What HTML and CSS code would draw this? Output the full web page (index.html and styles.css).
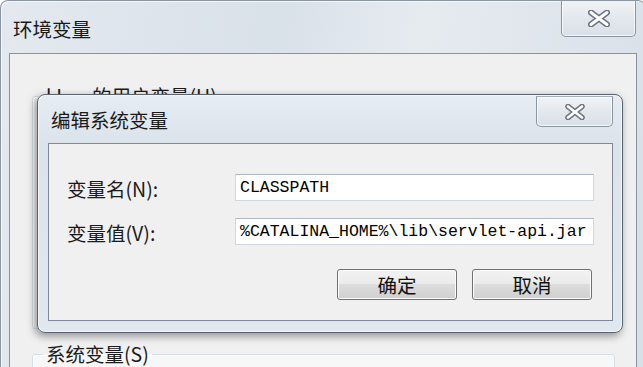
FILE: index.html
```html
<!DOCTYPE html>
<html>
<head>
	<meta charset="utf-8">
	<title>环境变量</title>
	<link rel="stylesheet" href="styles.css">
</head>
<body>
<div class="window">
	<div class="titlebar">
		<span class="title">环境变量</span>
		<div class="close close-main">
			<svg width="22" height="17" viewBox="0 0 22 17"><path d="M3 2.5 L19 14.5 M19 2.5 L3 14.5" stroke="#6d7580" stroke-width="6" stroke-linecap="round"/><path d="M3 2.5 L19 14.5 M19 2.5 L3 14.5" stroke="#fff" stroke-width="3" stroke-linecap="round"/></svg>
		</div>
	</div>
	<div class="client">
		<fieldset class="group group-user">
			<legend>lJ<span class="user-gap"></span>的用户变量(U)</legend>
		</fieldset>
		<fieldset class="group group-sys">
			<legend>系统变量(S)</legend>
		</fieldset>
	</div>

	<div class="dialog">
		<div class="dlg-titlebar">
			<span class="dlg-title">编辑系统变量</span>
			<div class="close close-dlg">
				<svg width="20" height="16" viewBox="0 0 20 16"><path d="M3 2.5 L17 13.5 M17 2.5 L3 13.5" stroke="#6d7580" stroke-width="5.5" stroke-linecap="round"/><path d="M3 2.5 L17 13.5 M17 2.5 L3 13.5" stroke="#fff" stroke-width="2.6" stroke-linecap="round"/></svg>
			</div>
		</div>
		<div class="dlg-client">
			<div class="form">
				<label class="label">变量名(N):</label>
				<div class="field">CLASSPATH</div>
				<label class="label">变量值(V):</label>
				<div class="field">%CATALINA_HOME%\lib\servlet-api.jar</div>
			</div>
			<div class="buttons">
				<button class="btn">确定</button>
				<button class="btn">取消</button>
			</div>
		</div>
	</div>
</div>
</body>
</html>
```
FILE: styles.css
```css
body{
	margin: 0;
	background: #fff;
	overflow: hidden;
	font-family: "Noto Sans CJK SC", sans-serif;
	color: #1a1a1a;
}
.window{
	position: relative;
	width: 646px;
	height: 367px;
	box-sizing: border-box;
	border: 1px solid #8c96a1;
	border-bottom: none;
	border-radius: 8px 8px 0 0;
	padding: 0 8px;
	overflow: hidden;
	background: linear-gradient(100deg, #e3e9ef 0%, #d9e1e9 40%, #e6ebf0 60%, #d7dfe7 100%);
	box-shadow: inset 1px 1px 0 #f4f7fa;
}
.titlebar{
	display: flex;
	height: 52px;
}
.title{
	font-size: 19.5px;
	line-height: 24px;
	padding: 16px 0 0 4px;
}
.close{
	margin-left: auto;
	display: flex;
	align-items: center;
	justify-content: center;
	box-sizing: border-box;
	border: 1px solid #8a95a2;
	border-top: none;
	border-radius: 0 0 5px 5px;
	background: linear-gradient(#f1f4f7, #e3e8ed 50%, #d9e0e7);
	box-shadow: inset 0 0 0 1px rgba(255,255,255,.7);
}
.close-main{
	width: 75px;
	height: 37px;
	margin-top: -1px;
	margin-right: 1px;
}
.client{
	height: 330px;
	border: 1px solid #8b939c;
	background: #f0f0f0;
	padding: 30px 21px 0 22px;
	display: flex;
	flex-direction: column;
	gap: 13px;
}
.group{
	margin: 0;
	padding: 0 10px;
	border: 1px solid #d5dfe5;
	border-radius: 3px;
	box-shadow: inset 1px 1px 0 #fff;
	box-sizing: border-box;
	flex-shrink: 0;
}
.group legend{
	font-size: 19.5px;
	line-height: 24px;
	padding: 0 3px;
}
.user-gap{
	display: inline-block;
	width: 30px;
}
.group-user{
	height: 245px;
}
.group-sys{
	height: 80px;
	background: #f7f7f7;
}

.dialog{
	position: absolute;
	left: 36px;
	top: 93px;
	width: 586px;
	height: 239px;
	box-sizing: border-box;
	border: 1px solid #59636e;
	border-radius: 8px;
	padding: 0 9px 11px 10px;
	display: flex;
	flex-direction: column;
	background: linear-gradient(#e6ecf2, #dbe3eb 50px, #e1e7ee);
	box-shadow: inset 0 0 0 1px #f3f6f9, -2px 3px 9px rgba(0,0,0,.4);
}
.dlg-titlebar{
	display: flex;
	height: 48px;
}
.dlg-title{
	font-size: 19.5px;
	line-height: 24px;
	padding: 13px 0 0 3px;
}
.close-dlg{
	width: 77px;
	height: 31px;
	margin-top: 1px;
	margin-right: 0;
	border-top: 1px solid #a3adb8;
	border-radius: 0 0 5px 5px;
}
.dlg-client{
	flex: 1;
	border: 1px solid #7f8994;
	background: #f0f0f0;
	padding: 30px 18px 0 18px;
}
.form{
	display: grid;
	grid-template-columns: 168px 1fr;
	row-gap: 17px;
	align-items: center;
}
.label{
	font-size: 19.5px;
	line-height: 24px;
	padding-top: 2px;
}
.field{
	height: 27px;
	box-sizing: border-box;
	border: 1px solid #cfd8e0;
	border-top-color: #aeb9c4;
	background: #fff;
	padding: 0 4px;
	font-family: "Liberation Mono", monospace;
	font-size: 16.5px;
	line-height: 25px;
	color: #000;
	white-space: nowrap;
	overflow: hidden;
}
.buttons{
	display: flex;
	justify-content: flex-end;
	gap: 15px;
	margin-top: 24px;
	padding-right: 2px;
}
.btn{
	width: 120px;
	height: 31px;
	border: 1px solid #707070;
	border-radius: 3px;
	background: linear-gradient(#f2f2f2, #ebebeb 50%, #dddddd 50%, #cfcfcf);
	box-shadow: inset 0 0 0 1px #fcfcfc;
	font-family: "Noto Sans CJK SC", sans-serif;
	font-size: 19.5px;
	line-height: 24px;
	color: #111;
	padding: 0;
}
```
